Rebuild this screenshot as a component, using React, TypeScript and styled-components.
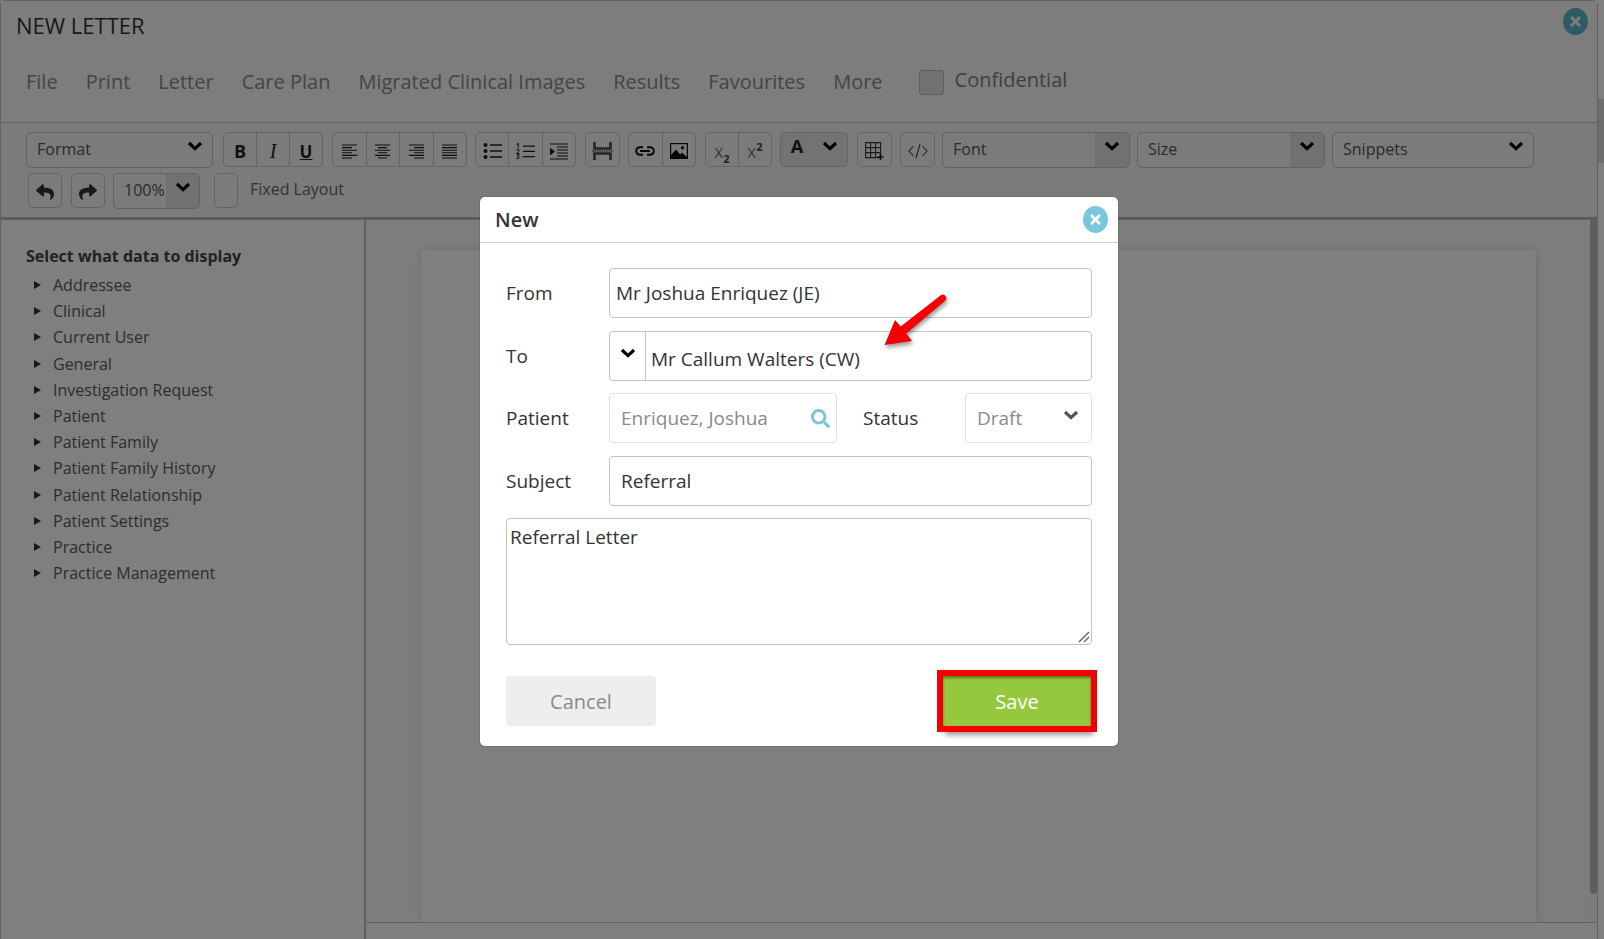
import React from 'react'
import styled, { createGlobalStyle } from 'styled-components'
import { FaReply, FaSearch, FaShare, FaTimes } from 'react-icons/fa'

const GlobalStyle = createGlobalStyle`
  html, body {
    margin: 0;
    padding: 0;
    background: #fff;
    overflow: hidden;
  }
  * {
    box-sizing: border-box;
  }
  body {
    font-family: "Open Sans", "Liberation Sans", sans-serif;
  }
`

const Page = styled.div`
  position: relative;
  display: flex;
  width: 1604px;
  height: 939px;
  overflow: hidden;
`

const Window = styled.div`
  flex: 1;
  display: flex;
  flex-direction: column;
  min-width: 0;
  border: 1px solid #c4c4c4;
  border-bottom: 0;
  border-radius: 5px 5px 0 0;
  background: #fff;
`

const PageScroll = styled.div`
  width: 6px;
  padding-top: 99px;
  background: #fff;
`

const PageThumb = styled.div`
  height: 64px;
  background: #d8d8d8;
`

const Header = styled.div`
  height: 121px;
  background: #fafafa;
`

const TitleRow = styled.div`
  display: flex;
  justify-content: space-between;
  height: 49px;
  padding: 7px 9px 0 15px;
`

const Title = styled.h1`
  margin: 0;
  font-size: 22px;
  line-height: 34px;
  font-weight: 400;
  color: #333;
`

const CloseButton = styled.button<{ $dim?: boolean }>`
  display: flex;
  align-items: center;
  justify-content: center;
  width: 25px;
  height: 27px;
  padding: 0;
  border: 0;
  border-radius: 50%;
  color: #fff;
  background: ${(p) => (p.$dim ? '#5bb6d0' : '#7cc6dc')};
`

const MenuRow = styled.nav`
  display: flex;
  align-items: center;
  gap: 28px;
  height: 64px;
  padding-left: 25px;
`

const MenuItem = styled.span`
  font-size: 20px;
  line-height: 28px;
  color: #8a8a8a;
`

const Confidential = styled.label`
  display: flex;
  align-items: center;
  gap: 11px;
  margin-left: 8px;
  font-size: 20px;
  color: #808080;
  span {
    position: relative;
    top: -3px;
  }
`

const Check = styled.i<{ $small?: boolean }>`
  display: block;
  width: ${(p) => (p.$small ? 24 : 25)}px;
  height: ${(p) => (p.$small ? 24 : 25)}px;
  border: 1px solid #bbb;
  border-radius: 3px;
  background: #e2e2e2;
`

const Toolbar = styled.div`
  display: flex;
  flex-direction: column;
  gap: 6px;
  height: 98px;
  padding: 9px 0 0 25px;
  border-top: 1px solid #c4c4c4;
  border-bottom: 3px solid #b8b8b8;
  background: #f7f7f7;
`

const ToolRow = styled.div`
  display: flex;
  align-items: center;
  height: 35px;
`

const ToolGroup = styled.div<{ $w: number; $gap?: number; $shade?: boolean }>`
  display: flex;
  width: ${(p) => p.$w}px;
  height: 35px;
  margin-left: ${(p) => p.$gap ?? 0}px;
  border: 1px solid #c9c9c9;
  border-radius: 5px;
  overflow: hidden;
  background: ${(p) => (p.$shade ? '#e6e6e6' : 'transparent')};
`

const ToolButton = styled.div`
  flex: 1;
  display: flex;
  align-items: center;
  justify-content: center;
  padding-top: 3px;
  color: #1d1d1d;
  font-size: 17px;
  & + & {
    border-left: 1px solid #c9c9c9;
  }
`

const BoldMark = styled.b`
  font-size: 18px;
  color: #222;
`

const ItalicMark = styled.i`
  font-family: "Liberation Serif", serif;
  font-size: 20px;
  color: #222;
`

const UnderMark = styled.span`
  font-size: 17px;
  font-weight: 700;
  text-decoration: underline;
  color: #222;
`

const ScriptMark = styled.span`
  font-size: 18px;
  font-weight: 300;
  color: #444;
  sub, sup {
    font-size: 11px;
    font-weight: 700;
    line-height: 0;
  }
`

const ColorMark = styled.span`
  position: relative;
  top: -5px;
  font-size: 18px;
  font-weight: 700;
  color: #222;
`

const Select = styled.div<{ $w: number; $gap?: number }>`
  display: flex;
  width: ${(p) => p.$w}px;
  height: 36px;
  margin-left: ${(p) => p.$gap ?? 0}px;
  border: 1px solid #c4c4c4;
  border-radius: 5px;
  overflow: hidden;
  font-size: 16px;
  color: #555;
`

const SelectLabel = styled.span`
  flex: 1;
  padding-left: 10px;
  line-height: 33px;
`

const SelectArrow = styled.span<{ $shade?: boolean; $w?: number }>`
  display: flex;
  justify-content: center;
  width: ${(p) => p.$w ?? 34}px;
  padding-top: 8px;
  background: ${(p) => (p.$shade ? '#e2e2e2' : 'transparent')};
`

const ChevronSvg = styled.svg`
  display: block;
  flex: none;
`

const Chevron = ({ color = '#000' }: { color?: string }) => (
  <ChevronSvg width="16" height="10" viewBox="0 0 16 10">
    <polyline points="2,2 8,7.6 14,2" fill="none" stroke={color} strokeWidth="3.2" />
  </ChevronSvg>
)

const FixedLabel = styled.span`
  margin-left: 12px;
  font-size: 16px;
  color: #666;
  position: relative;
  top: -2px;
`

const IconSvg = styled.svg`
  display: block;
`

const AlignIcon = ({ lines }: { lines: [number, number][] }) => (
  <IconSvg width="17" height="15" viewBox="0 0 17 15">
    {lines.map(([x1, x2], i) => (
      <line key={i} x1={x1} x2={x2} y1={1 + i * 2.6} y2={1 + i * 2.6} stroke="#1d1d1d" strokeWidth="1.1" />
    ))}
  </IconSvg>
)

const BulletIcon = () => (
  <IconSvg width="19" height="16" viewBox="0 0 19 16">
    {[2, 8, 14].map((y) => (
      <g key={y}>
        <circle cx="2.5" cy={y} r="2" fill="#1d1d1d" />
        <line x1="7" x2="19" y1={y} y2={y} stroke="#1d1d1d" strokeWidth="1.3" />
      </g>
    ))}
  </IconSvg>
)

const NumberIcon = () => (
  <IconSvg width="19" height="17" viewBox="0 0 19 17">
    {[1, 2, 3].map((n) => (
      <g key={n}>
        <text x="0" y={n * 5.4} fontSize="6.5" fontWeight="700" fill="#1d1d1d" fontFamily="Open Sans">
          {n}
        </text>
        {n < 3 || true ? <line x1="7" x2="19" y1={n * 5.2 - 2} y2={n * 5.2 - 2} stroke="#1d1d1d" strokeWidth="1.3" /> : null}
      </g>
    ))}
  </IconSvg>
)

const IndentIcon = () => (
  <IconSvg width="19" height="17" viewBox="0 0 19 17">
    <line x1="1" x2="19" y1="1" y2="1" stroke="#1d1d1d" strokeWidth="1.2" />
    <line x1="1" x2="19" y1="16" y2="16" stroke="#1d1d1d" strokeWidth="1.2" />
    {[4, 7, 10, 13].map((y) => (
      <line key={y} x1="8" x2="19" y1={y} y2={y} stroke="#1d1d1d" strokeWidth="1.2" />
    ))}
    <polygon points="1,4.5 6,8.5 1,12.5" fill="#1d1d1d" />
  </IconSvg>
)

const BreakIcon = () => (
  <IconSvg width="21" height="18" viewBox="0 0 21 18">
    <path d="M2.5 0v6.5h16V0M2.5 18v-6.5h16V18" fill="none" stroke="#4a4a4a" strokeWidth="2.6" />
    <line x1="0" x2="21" y1="9" y2="9" stroke="#4a4a4a" strokeWidth="1.6" strokeDasharray="1.4 1" />
  </IconSvg>
)

const LinkIcon = () => (
  <IconSvg width="20" height="10" viewBox="0 0 20 10">
    <path
      d="M8 1.2H5a3.8 3.8 0 0 0 0 7.6h3M12 1.2h3a3.8 3.8 0 0 1 0 7.6h-3M5 5h10"
      fill="none"
      stroke="#111"
      strokeWidth="2"
    />
  </IconSvg>
)

const ImageIcon = () => (
  <IconSvg width="18" height="16" viewBox="0 0 18 16">
    <rect x="0.6" y="0.6" width="16.8" height="14.8" fill="#f4f4f4" stroke="#111" strokeWidth="1.2" />
    <circle cx="12.5" cy="4.8" r="1.7" fill="#111" />
    <path d="M1 15V12L6 6.5l4 5 2-1.8L17 14v1z" fill="#111" />
  </IconSvg>
)

const TableIcon = () => (
  <IconSvg width="19" height="18" viewBox="0 0 19 18">
    <path
      d="M.6.6h15v15H.6zM.6 5.6h15M.6 10.6h15M5.6.6v15M10.6.6v15"
      fill="none"
      stroke="#333"
      strokeWidth="1.1"
    />
    <path d="M15.5 12v6M12.5 15h6" stroke="#222" strokeWidth="1.6" />
  </IconSvg>
)

const CodeIcon = () => (
  <IconSvg width="20" height="16" viewBox="0 0 20 16">
    <path d="M5.5 3L1 8l4.5 5M14.5 3L19 8l-4.5 5M12 1L8 15" fill="none" stroke="#444" strokeWidth="1.1" />
  </IconSvg>
)

const Body = styled.div`
  flex: 1;
  display: flex;
  min-height: 0;
`

const Sidebar = styled.aside`
  width: 365px;
  padding: 24px 0 0 25px;
  border-right: 2px solid #c0c0c0;
`

const SideTitle = styled.h2`
  margin: 0 0 4px;
  font-size: 16px;
  line-height: 24px;
  font-weight: 700;
  color: #444;
`

const SideList = styled.ul`
  margin: 0;
  padding: 0 0 0 8px;
  list-style: none;
`

const SideItem = styled.li`
  display: flex;
  align-items: center;
  gap: 12px;
  height: 26.2px;
  font-size: 16px;
  color: #5a5a5a;
  &::before {
    content: "";
    border-left: 7px solid #333;
    border-top: 4px solid transparent;
    border-bottom: 4px solid transparent;
  }
`

const Editor = styled.div`
  flex: 1;
  display: flex;
  flex-direction: column;
  min-width: 0;
`

const EditorMain = styled.div`
  flex: 1;
  display: flex;
  min-height: 0;
`

const EditorCanvas = styled.div`
  flex: 1;
  padding: 30px 54px 0 55px;
  overflow: hidden;
  background: #fbfbfb;
`

const PaperSheet = styled.div`
  height: 100%;
  background: #fff;
  box-shadow: 0 0 8px rgba(0, 0, 0, 0.14);
`

const ScrollTrack = styled.div`
  width: 7px;
  background: #f6f6f6;
`

const ScrollThumb = styled.div`
  height: 674px;
  border-radius: 0 0 4px 4px;
  background: #bcbcbc;
`

const HorizontalBar = styled.div`
  height: 17px;
  border-top: 1px solid #c4c4c4;
`

const Overlay = styled.div`
  position: absolute;
  inset: 0;
  display: flex;
  align-items: flex-start;
  justify-content: center;
  padding: 197px 6px 0 0;
  background: rgba(0, 0, 0, 0.5);
`

const Modal = styled.section`
  position: relative;
  width: 638px;
  height: 549px;
  border-radius: 5px;
  background: #fff;
  color: #333;
  box-shadow: 0 0 2px rgba(0, 0, 0, 0.3);
`

const ModalHeader = styled.header`
  display: flex;
  align-items: center;
  justify-content: space-between;
  height: 46px;
  padding: 0 10px 0 15px;
  border-bottom: 1px solid #ccc;
`

const ModalTitle = styled.h3`
  margin: 0;
  font-size: 20px;
  font-weight: 600;
  color: #333;
`

const Form = styled.form`
  display: grid;
  grid-template-columns: 103px 483px;
  grid-auto-rows: 50px;
  row-gap: 12.5px;
  align-items: center;
  padding: 25px 0 0 26px;
`

const FieldLabel = styled.label`
  font-size: 19px;
  color: #333;
`

const Field = styled.div<{ $light?: boolean; $muted?: boolean; $pad?: number }>`
  display: flex;
  align-items: center;
  height: 50px;
  padding-left: ${(p) => p.$pad ?? 11}px;
  border: 1px solid ${(p) => (p.$light ? '#e0e0e0' : '#c4c4c4')};
  border-radius: 4px;
  font-size: 19px;
  color: ${(p) => (p.$muted ? '#8a8a8a' : '#333')};
`

const ToField = styled(Field)`
  padding-left: 0;
`

const ToArrow = styled.span`
  display: flex;
  justify-content: center;
  width: 36px;
  height: 100%;
  padding-top: 16px;
  border-right: 1px solid #c4c4c4;
`

const ToValue = styled.span`
  padding: 7px 0 0 5px;
`

const PatientRow = styled.div`
  display: flex;
  align-items: center;
`

const PatientField = styled(Field)`
  width: 228px;
  justify-content: space-between;
  padding-right: 6px;
  color: #8a8a8a;
  svg {
    color: #7cc6dc;
  }
`

const StatusLabel = styled(FieldLabel)`
  width: 102px;
  margin-left: 26px;
`

const StatusField = styled(Field)`
  width: 127px;
  justify-content: space-between;
  padding-right: 12px;
  svg {
    margin-top: -7px;
  }
`

const TextBox = styled.div`
  position: relative;
  grid-column: 1 / -1;
  align-self: start;
  height: 127px;
  padding: 4px 3px;
  border: 1px solid #c4c4c4;
  border-radius: 4px;
  font-size: 19px;
  line-height: 28px;
  color: #333;
`

const Grip = styled.svg`
  position: absolute;
  right: 1px;
  bottom: 1px;
`

const Footer = styled.footer`
  display: flex;
  justify-content: space-between;
  width: 585px;
  margin: 108px 0 0 26px;
`

const FooterButton = styled.button`
  width: 150px;
  height: 50px;
  border: 0;
  border-radius: 4px;
  font-family: inherit;
  font-size: 20px;
  color: #8a8a8a;
  background: #eee;
`

const SaveButton = styled(FooterButton)`
  width: 148px;
  border-radius: 0;
  color: #fff;
  background: #96c83f;
  box-shadow: inset 0 2px 3px rgba(0, 0, 0, 0.4), 0 0 0 6px #f40000, 2px 9px 5px rgba(0, 0, 0, 0.4);
`

const Annotation = styled.svg`
  position: absolute;
  left: 390px;
  top: 88px;
  filter: drop-shadow(1px 3px 2px rgba(0, 0, 0, 0.4));
`

const menuItems = ['File', 'Print', 'Letter', 'Care Plan', 'Migrated Clinical Images', 'Results', 'Favourites', 'More']

const dataGroups = [
  'Addressee',
  'Clinical',
  'Current User',
  'General',
  'Investigation Request',
  'Patient',
  'Patient Family',
  'Patient Family History',
  'Patient Relationship',
  'Patient Settings',
  'Practice',
  'Practice Management'
]

const alignLeft: [number, number][] = [[1, 16], [1, 11], [1, 16], [1, 11], [1, 16], [1, 11]]
const alignCenter: [number, number][] = [[1, 16], [4, 13], [1, 16], [4, 13], [1, 16], [4, 13]]
const alignRight: [number, number][] = [[1, 16], [6, 16], [1, 16], [6, 16], [1, 16], [6, 16]]
const alignFull: [number, number][] = [[1, 16], [1, 16], [1, 16], [1, 16], [1, 16], [1, 16]]

const App = () => (
  <Page>
    <GlobalStyle />
    <Window>
      <Header>
        <TitleRow>
          <Title>NEW LETTER</Title>
          <CloseButton $dim type="button">
            <FaTimes size={15} />
          </CloseButton>
        </TitleRow>
        <MenuRow>
          {menuItems.map((item) => (
            <MenuItem key={item}>{item}</MenuItem>
          ))}
          <Confidential>
            <Check />
            <span>Confidential</span>
          </Confidential>
        </MenuRow>
      </Header>

      <Toolbar>
        <ToolRow>
          <Select $w={187}>
            <SelectLabel>Format</SelectLabel>
            <SelectArrow>
              <Chevron />
            </SelectArrow>
          </Select>
          <ToolGroup $w={100} $gap={10}>
            <ToolButton><BoldMark>B</BoldMark></ToolButton>
            <ToolButton><ItalicMark>I</ItalicMark></ToolButton>
            <ToolButton><UnderMark>U</UnderMark></ToolButton>
          </ToolGroup>
          <ToolGroup $w={135} $gap={9}>
            <ToolButton><AlignIcon lines={alignLeft} /></ToolButton>
            <ToolButton><AlignIcon lines={alignCenter} /></ToolButton>
            <ToolButton><AlignIcon lines={alignRight} /></ToolButton>
            <ToolButton><AlignIcon lines={alignFull} /></ToolButton>
          </ToolGroup>
          <ToolGroup $w={101} $gap={8}>
            <ToolButton><BulletIcon /></ToolButton>
            <ToolButton><NumberIcon /></ToolButton>
            <ToolButton><IndentIcon /></ToolButton>
          </ToolGroup>
          <ToolGroup $w={35} $gap={9}>
            <ToolButton><BreakIcon /></ToolButton>
          </ToolGroup>
          <ToolGroup $w={68} $gap={8}>
            <ToolButton><LinkIcon /></ToolButton>
            <ToolButton><ImageIcon /></ToolButton>
          </ToolGroup>
          <ToolGroup $w={67} $gap={9}>
            <ToolButton><ScriptMark>x<sub>2</sub></ScriptMark></ToolButton>
            <ToolButton><ScriptMark>x<sup>2</sup></ScriptMark></ToolButton>
          </ToolGroup>
          <ToolGroup $w={68} $gap={8} $shade>
            <ToolButton><ColorMark>A</ColorMark></ToolButton>
            <SelectArrow><Chevron /></SelectArrow>
          </ToolGroup>
          <ToolGroup $w={35} $gap={9}>
            <ToolButton><TableIcon /></ToolButton>
          </ToolGroup>
          <ToolGroup $w={35} $gap={8}>
            <ToolButton><CodeIcon /></ToolButton>
          </ToolGroup>
          <Select $w={188} $gap={7}>
            <SelectLabel>Font</SelectLabel>
            <SelectArrow $shade>
              <Chevron />
            </SelectArrow>
          </Select>
          <Select $w={188} $gap={7}>
            <SelectLabel>Size</SelectLabel>
            <SelectArrow $shade>
              <Chevron />
            </SelectArrow>
          </Select>
          <Select $w={202} $gap={7}>
            <SelectLabel>Snippets</SelectLabel>
            <SelectArrow>
              <Chevron />
            </SelectArrow>
          </Select>
        </ToolRow>
        <ToolRow>
          <ToolGroup $w={34} $gap={2}>
            <ToolButton><FaReply size={18} color="#333" /></ToolButton>
          </ToolGroup>
          <ToolGroup $w={34} $gap={9}>
            <ToolButton><FaShare size={18} color="#333" /></ToolButton>
          </ToolGroup>
          <Select $w={87} $gap={8}>
            <SelectLabel>100%</SelectLabel>
            <SelectArrow $shade $w={33}>
              <Chevron />
            </SelectArrow>
          </Select>
          <ToolGroup as={Check} $w={24} $gap={14} $small />
          <FixedLabel>Fixed Layout</FixedLabel>
        </ToolRow>
      </Toolbar>

      <Body>
        <Sidebar>
          <SideTitle>Select what data to display</SideTitle>
          <SideList>
            {dataGroups.map((group) => (
              <SideItem key={group}>{group}</SideItem>
            ))}
          </SideList>
        </Sidebar>
        <Editor>
          <EditorMain>
            <EditorCanvas>
              <PaperSheet />
            </EditorCanvas>
            <ScrollTrack>
              <ScrollThumb />
            </ScrollTrack>
          </EditorMain>
          <HorizontalBar />
        </Editor>
      </Body>
    </Window>
    <PageScroll>
      <PageThumb />
    </PageScroll>

    <Overlay>
      <Modal>
        <ModalHeader>
          <ModalTitle>New</ModalTitle>
          <CloseButton type="button">
            <FaTimes size={15} />
          </CloseButton>
        </ModalHeader>
        <Form>
          <FieldLabel>From</FieldLabel>
          <Field $pad={6}>Mr Joshua Enriquez (JE)</Field>

          <FieldLabel>To</FieldLabel>
          <ToField>
            <ToArrow>
              <Chevron />
            </ToArrow>
            <ToValue>Mr Callum Walters (CW)</ToValue>
          </ToField>

          <FieldLabel>Patient</FieldLabel>
          <PatientRow>
            <PatientField $light>
              Enriquez, Joshua
              <FaSearch size={19} />
            </PatientField>
            <StatusLabel>Status</StatusLabel>
            <StatusField $light $muted>
              Draft
              <Chevron color="#555" />
            </StatusField>
          </PatientRow>

          <FieldLabel>Subject</FieldLabel>
          <Field>Referral</Field>

          <TextBox>
            Referral Letter
            <Grip width="12" height="12" viewBox="0 0 12 12">
              <path d="M1 11L11 1M6 11l5-5" stroke="#555" strokeWidth="1.2" />
            </Grip>
          </TextBox>
        </Form>
        <Footer>
          <FooterButton type="button">Cancel</FooterButton>
          <SaveButton type="button">Save</SaveButton>
        </Footer>
        <Annotation width="90" height="70" viewBox="870 285 90 70">
          <path
            d="M940.8 295.3L900.7 326.5L895 320L884.6 345L912 341L906.3 333.5L945.2 300.7A3.5 3.5 0 0 0 940.8 295.3Z"
            fill="#f40000"
          />
        </Annotation>
      </Modal>
    </Overlay>
  </Page>
)

export default App
